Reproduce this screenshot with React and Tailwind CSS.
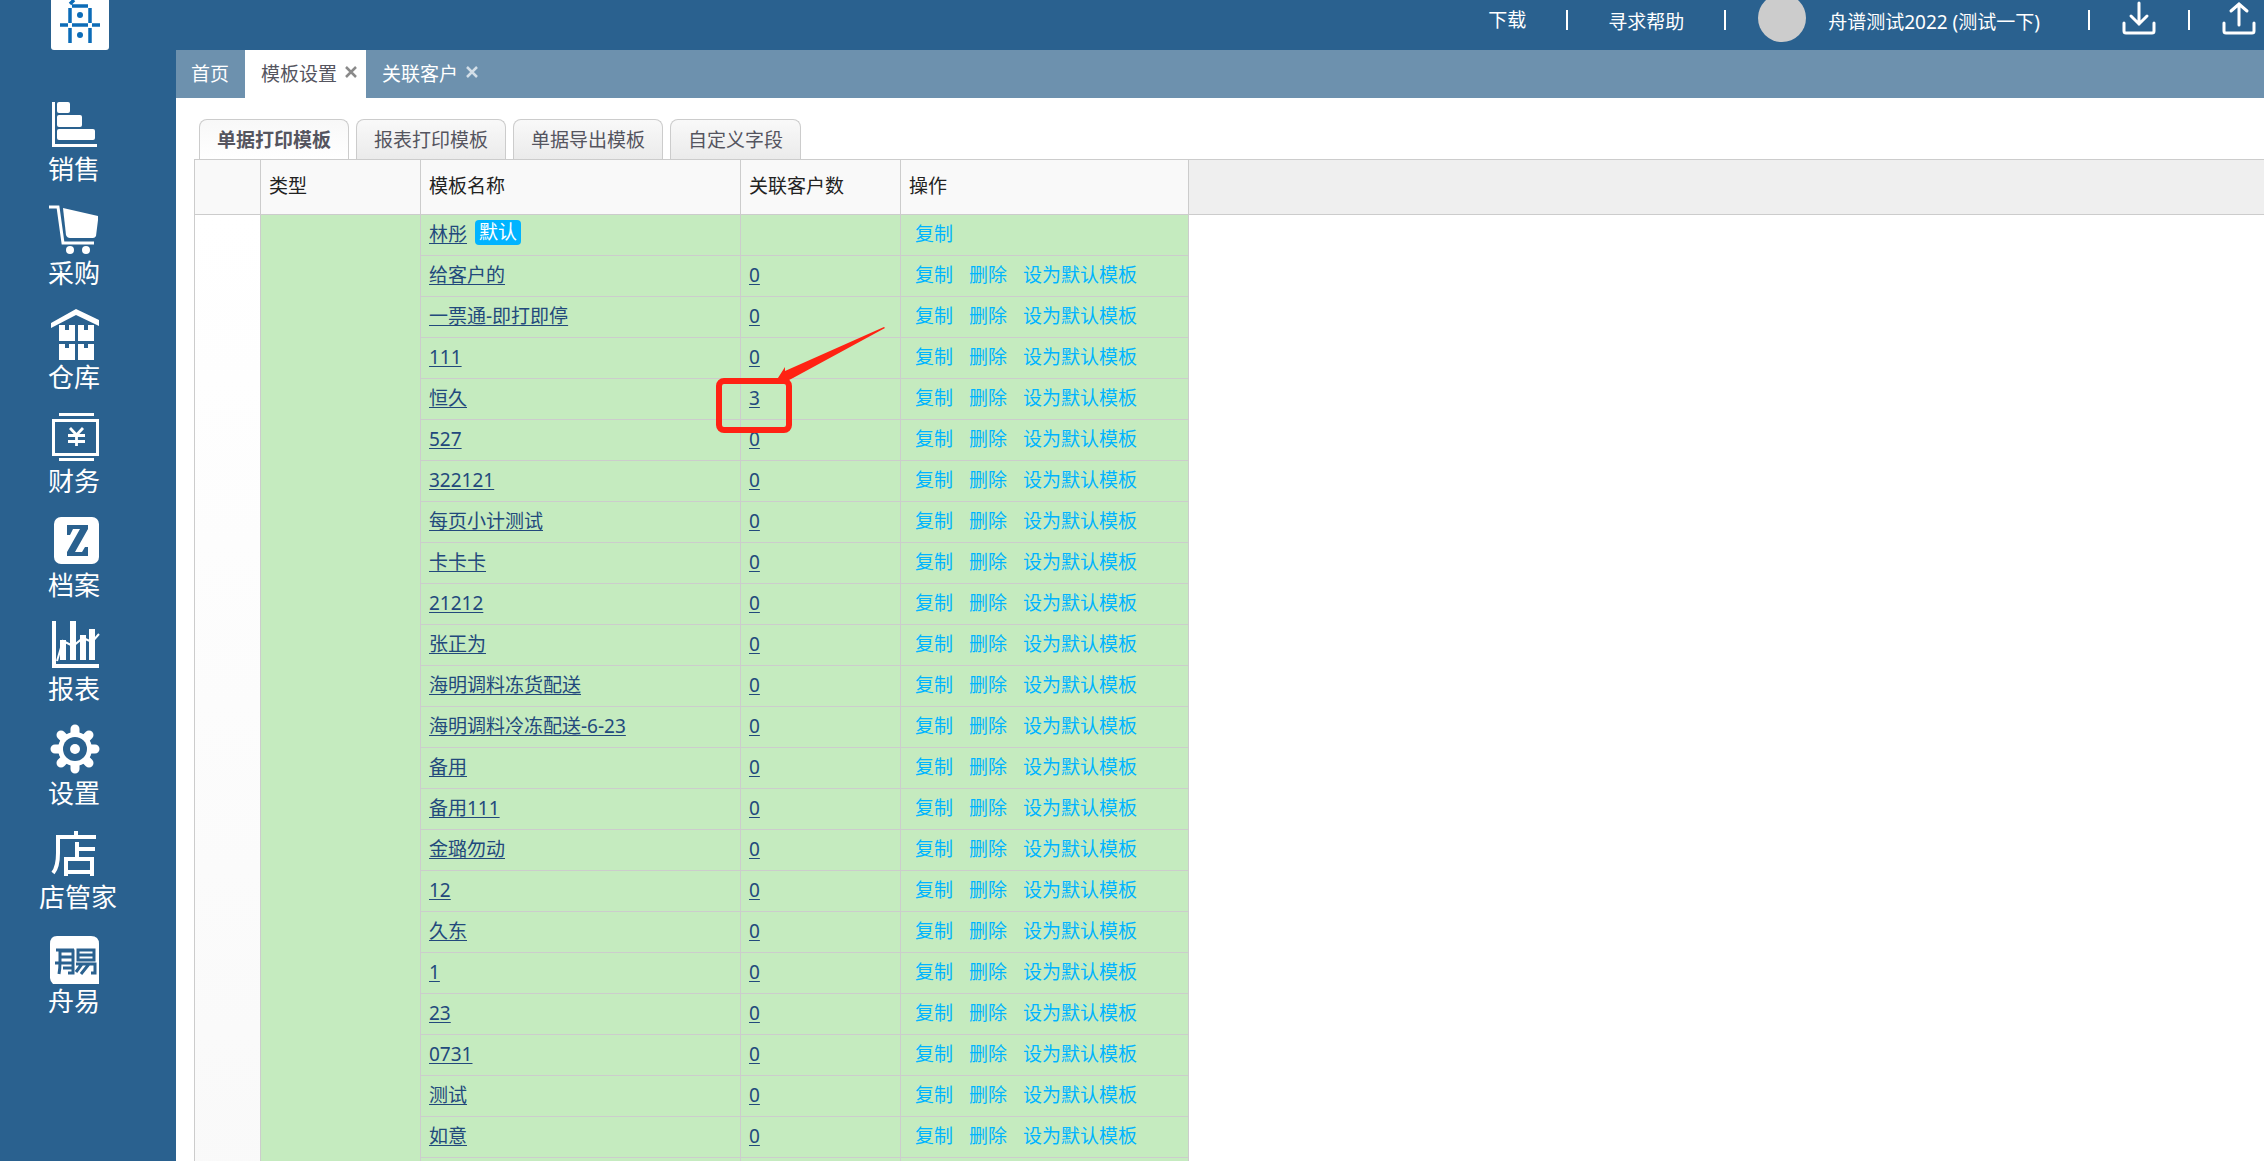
import React from 'react';

const iconClass = 'block h-12 w-[50px] overflow-visible';

const SalesIcon = () => (
  <svg viewBox="0 0 50 48" className={iconClass} fill="white" aria-hidden="true">
    <path d="M3 1h3v42h42v3H3z" />
    <rect x="8" y="1" width="13" height="11" rx="2" />
    <rect x="8" y="14" width="25" height="12" rx="2" />
    <rect x="8" y="28" width="38" height="11" rx="2" />
  </svg>
);

const CartIcon = () => (
  <svg viewBox="0 0 50 48" className={iconClass} aria-hidden="true">
    <path d="M0 2h9l5 36h31" fill="none" stroke="white" strokeWidth="3" />
    <path d="M14 3l35 8v4l-2 16q-1 2-3 2H21q-3 0-4-3z" fill="white" />
    <circle cx="21" cy="45" r="4" fill="white" />
    <circle cx="37" cy="45" r="4" fill="white" />
  </svg>
);

const WarehouseIcon = () => (
  <svg viewBox="0 0 50 48" className={iconClass} fill="white" aria-hidden="true">
    <path d="M2 14L27 0l23 11v6L27 6 2 19z" />
    <path d="M10 16h6v5h4v-5h6v16H10z" />
    <path d="M29 16h6v5h4v-5h6v16H29z" />
    <path d="M10 35h6v4h4v-4h6v16H10z" />
    <path d="M29 35h6v4h4v-4h6v16H29z" />
  </svg>
);

const FinanceIcon = () => (
  <svg viewBox="0 0 50 48" className={iconClass} fill="none" stroke="white" aria-hidden="true">
    <path d="M10 1.5h35M10 46.500h35" strokeWidth="3" />
    <rect x="4.500" y="7.500" width="44" height="34" strokeWidth="3" />
    <path d="M21 15l6.500 7 6.500-7M27.500 21v12M19 22.500h17M19 28.500h17" strokeWidth="2.800" />
  </svg>
);

const ArchiveIcon = () => (
  <svg viewBox="0 0 50 48" className={iconClass} aria-hidden="true">
    <rect x="5" y="0" width="45" height="47" rx="7" fill="white" />
    <path d="M18 8h21v4L26 35h7l3-5h3v9H18v-4l13-23h-7l-3 6h-3z" fill="#2a618f" />
  </svg>
);

const ReportIcon = () => (
  <svg viewBox="0 0 50 48" className={iconClass} fill="none" stroke="white" aria-hidden="true">
    <path d="M5 0v45h45" strokeWidth="4" />
    <path d="M14 19v20M24 0v39M34 14v25M43 8v31" strokeWidth="6" />
    <path d="M8 40l6-20 10 5 10-8 9 4 7-8" strokeWidth="2" />
  </svg>
);

const GearIcon = () => (
  <svg viewBox="0 0 50 48" className={iconClass} aria-hidden="true">
    <g fill="none" stroke="white" strokeWidth="9" strokeLinecap="round">
      <path d="M26 4v40M6 24h40" />
      <path d="M12 10l28 28M12 38l28-28" />
    </g>
    <circle cx="26" cy="24" r="17" fill="white" />
    <circle cx="26" cy="24" r="12" fill="#2a618f" />
    <circle cx="26" cy="24" r="5" fill="white" />
  </svg>
);

const ShopIcon = () => (
  <svg viewBox="0 0 50 48" className={iconClass} fill="none" stroke="white" strokeWidth="4" aria-hidden="true">
    <path d="M27 2v5M47 8H9v16q0 14-5 20" />
    <path d="M28 13v15M28 20h18M17 47V30h26v17M17 43h26" />
  </svg>
);

const ZhouyiIcon = () => (
  <svg viewBox="0 -3 50 48" className={iconClass} aria-hidden="true">
    <path d="M8 0h34q8 0 8 8v40H4q-3-3-3-6V8q0-8 7-8z" fill="white" />
    <g fill="none" stroke="#2a618f" strokeWidth="3">
      <path d="M10 38q1-5 1-12V15h13v22h-5M6 27h18M11 21h13M14 32h10M7 14h18" />
      <path d="M29 14h16v10H29zM29 19h16M27 28h19v9h-4M33 28l-6 8M40 28l-8 10" />
    </g>
  </svg>
);

const LogoIcon = () => (
  <svg viewBox="0 0 58 50" className="block h-[50px] w-[58px]" aria-hidden="true">
    <path d="M0 0h58v47q0 3-3 3H3q-3 0-3-3z" fill="white" />
    <g fill="none" stroke="#0c6cb8" strokeWidth="3.500">
      <path d="M23 0l-4 4M21 6h16M19 8v15M39 8v15M19 28v15M39 28v15" />
      <path d="M9 25h8M21 25h16M41 25h8" />
    </g>
    <circle cx="29" cy="15" r="3" fill="#0c6cb8" />
    <circle cx="29" cy="35" r="3" fill="#0c6cb8" />
  </svg>
);

const TrayIcon = ({ up }) => (
  <svg viewBox="0 0 34 34" className="mb-1 block h-[34px] w-[34px]" fill="none" stroke="white" strokeWidth="3" strokeLinecap="round" aria-hidden="true">
    <path d="M2 22v8q0 2 2 2h26q2 0 2-2v-8" />
    <path d={up ? 'M17 24V3M9 10l8-7 8 7' : 'M17 2v21M9 15l8 8 8-8'} />
  </svg>
);

const menus = [
  { label: '销售', Icon: SalesIcon },
  { label: '采购', Icon: CartIcon },
  { label: '仓库', Icon: WarehouseIcon },
  { label: '财务', Icon: FinanceIcon },
  { label: '档案', Icon: ArchiveIcon },
  { label: '报表', Icon: ReportIcon },
  { label: '设置', Icon: GearIcon },
  { label: '店管家', Icon: ShopIcon },
  { label: '舟易', Icon: ZhouyiIcon },
];

const pageTabs = [
  { label: '首页' },
  { label: '模板设置', closable: true, active: true },
  { label: '关联客户', closable: true },
];

const templateTabs = ['单据打印模板', '报表打印模板', '单据导出模板', '自定义字段'];

const templates = [
  { name: '林彤', isDefault: true },
  { name: '给客户的', count: 0 },
  { name: '一票通-即打即停', count: 0 },
  { name: '111', count: 0 },
  { name: '恒久', count: 3 },
  { name: '527', count: 0 },
  { name: '322121', count: 0 },
  { name: '每页小计测试', count: 0 },
  { name: '卡卡卡', count: 0 },
  { name: '21212', count: 0 },
  { name: '张正为', count: 0 },
  { name: '海明调料冻货配送', count: 0 },
  { name: '海明调料冷冻配送-6-23', count: 0 },
  { name: '备用', count: 0 },
  { name: '备用111', count: 0 },
  { name: '金璐勿动', count: 0 },
  { name: '12', count: 0 },
  { name: '久东', count: 0 },
  { name: '1', count: 0 },
  { name: '23', count: 0 },
  { name: '0731', count: 0 },
  { name: '测试', count: 0 },
  { name: '如意', count: 0 },
];

const Divider = () => <span className="h-5 w-0.5 bg-white" />;

const Sidebar = () => (
  <aside className="flex w-44 shrink-0 flex-col bg-[#2a618f] text-white">
    <div className="pl-[51px]">
      <LogoIcon />
    </div>
    <nav className="flex flex-col pt-[51px]">
      {menus.map(({ label, Icon }) => (
        <a key={label} href="#" className="flex h-[104px] w-[150px] flex-col items-center pr-0.5">
          <Icon />
          <span className={`mt-1 text-[26px] leading-8 ${label.length > 2 ? 'ml-2' : ''}`}>{label}</span>
        </a>
      ))}
    </nav>
  </aside>
);

const TopBar = () => (
  <header className="flex h-[50px] shrink-0 items-start justify-end bg-[#2a618f] pr-2 text-white">
    <div className="flex h-10 items-center">
      <a href="#" className="mr-10">下载</a>
      <Divider />
      <a href="#" className="mx-10 pt-1">寻求帮助</a>
      <Divider />
      <span className="mr-[22px] mb-1 ml-8 h-12 w-12 rounded-full bg-[#ccc]" />
      <span className="mr-12 pt-1">舟谱测试2022 (测试一下)</span>
      <Divider />
      <button type="button" aria-label="下载文件" className="mx-8">
        <TrayIcon />
      </button>
      <Divider />
      <button type="button" aria-label="上传文件" className="ml-8">
        <TrayIcon up />
      </button>
    </div>
  </header>
);

const PageTabs = () => (
  <div className="flex h-12 shrink-0 bg-[#6d91ae]">
    {pageTabs.map((tab) => (
      <div
        key={tab.label}
        className={`flex items-center ${tab.closable ? 'pr-[9px] pl-4' : 'pr-4 pl-[15px]'} ${
          tab.active ? 'bg-white text-[#55555f]' : 'text-white'
        }`}
      >
        <button type="button">{tab.label}</button>
        {tab.closable && (
          <button type="button" aria-label={`关闭${tab.label}`} className="mb-1 ml-2">
            <svg
              viewBox="0 0 12 12"
              className={`block h-3 w-3 ${tab.active ? 'text-[#8a8a8a]' : 'text-[#d3dee7]'}`}
              fill="none"
              stroke="currentColor"
              strokeWidth="2.500"
            >
              <path d="M1 1l10 10M11 1L1 11" />
            </svg>
          </button>
        )}
      </div>
    ))}
  </div>
);

const TemplateTabs = () => (
  <div className="flex gap-[7px] pl-[5px]">
    {templateTabs.map((label, i) => (
      <button
        key={label}
        type="button"
        className={`h-10 rounded-t-lg border border-b-0 border-[#ccc] bg-linear-to-b px-[17px] text-[#55555f] ${
          i === 0 ? 'from-[#f8f8f8] to-white font-bold' : 'from-[#f9f9f9] to-[#ebebeb]'
        }`}
      >
        {label}
      </button>
    ))}
  </div>
);

// red box and arrow drawn over the linked customer count
const Marker = () => (
  <svg
    viewBox="0 0 172 112"
    className="pointer-events-none absolute -top-[52px] -left-[26px] z-10 h-[112px] w-[172px]"
    aria-hidden="true"
  >
    <rect x="4" y="54" width="70" height="49" rx="5" fill="none" stroke="#ff2213" strokeWidth="6" />
    <path d="M169 0l1 1-92 50-6 3H61l9-14v4z" fill="#ff2213" />
  </svg>
);

const TemplateTable = () => (
  <table className="w-[994px] shrink-0 table-fixed border-separate border-spacing-0 text-left">
    <colgroup>
      <col className="w-[66px]" />
      <col className="w-40" />
      <col className="w-80" />
      <col className="w-40" />
      <col className="w-72" />
    </colgroup>
    <thead>
      <tr className="h-[55px] bg-[#f9f9f9] text-[#222]">
        {['', '类型', '模板名称', '关联客户数', '操作'].map((title) => (
          <th key={title} className="border-r border-b border-[#ccc] px-2 pt-0 pb-0.5 font-normal">
            {title}
          </th>
        ))}
      </tr>
    </thead>
    <tbody>
      {templates.map((item, i) => (
        <tr key={item.name} className="h-[41px] bg-[#c5ebbf]">
          {i === 0 && (
            <>
              <td rowSpan={templates.length + 1} className="border-r border-[#ccc] bg-linear-to-b from-white to-[#f9f9f9]" />
              <td rowSpan={templates.length + 1} className="border-r border-[#ccc]" />
            </>
          )}
          <td className="border-r border-b border-[#ccc] px-2 pt-0 pb-0.5">
            <div className="flex items-center gap-2">
              <a href="#" className="text-[#22497c] underline underline-offset-2">{item.name}</a>
              {item.isDefault && (
                <span className="mb-1 rounded-sm bg-[#00b4ff] px-1 leading-[25px] text-white">默认</span>
              )}
            </div>
          </td>
          <td className="relative border-r border-b border-[#ccc] px-2 pt-0 pb-0.5">
            {item.count !== undefined && (
              <a href="#" className="text-[#22497c] underline underline-offset-2">{item.count}</a>
            )}
            {item.count > 0 && <Marker />}
          </td>
          <td className="border-r border-b border-[#ccc] px-3.5 pt-0 pb-0.5 text-[#00b4ff]">
            <div className="flex gap-4">
              <button type="button">复制</button>
              {!item.isDefault && (
                <>
                  <button type="button">删除</button>
                  <button type="button">设为默认模板</button>
                </>
              )}
            </div>
          </td>
        </tr>
      ))}
      <tr className="h-[41px] bg-[#c5ebbf]">
        <td className="border-r border-[#ccc]" />
        <td className="border-r border-[#ccc]" />
        <td className="border-r border-[#ccc]" />
      </tr>
    </tbody>
  </table>
);

const App = () => (
  <div className="flex h-screen overflow-hidden bg-white font-['Noto_Sans','Noto_Sans_CJK_SC',sans-serif] text-[19px] leading-7">
    <Sidebar />
    <div className="flex min-w-0 flex-1 flex-col">
      <TopBar />
      <PageTabs />
      <main className="flex min-h-0 flex-1 flex-col pt-[21px] pl-[18px]">
        <TemplateTabs />
        <div className="flex min-h-0 flex-1 items-start overflow-hidden border-t border-l border-[#ccc]">
          <TemplateTable />
          <div className="h-[55px] flex-1 border-b border-[#ccc] bg-[#efefef]" />
        </div>
      </main>
    </div>
  </div>
);

export default App;
